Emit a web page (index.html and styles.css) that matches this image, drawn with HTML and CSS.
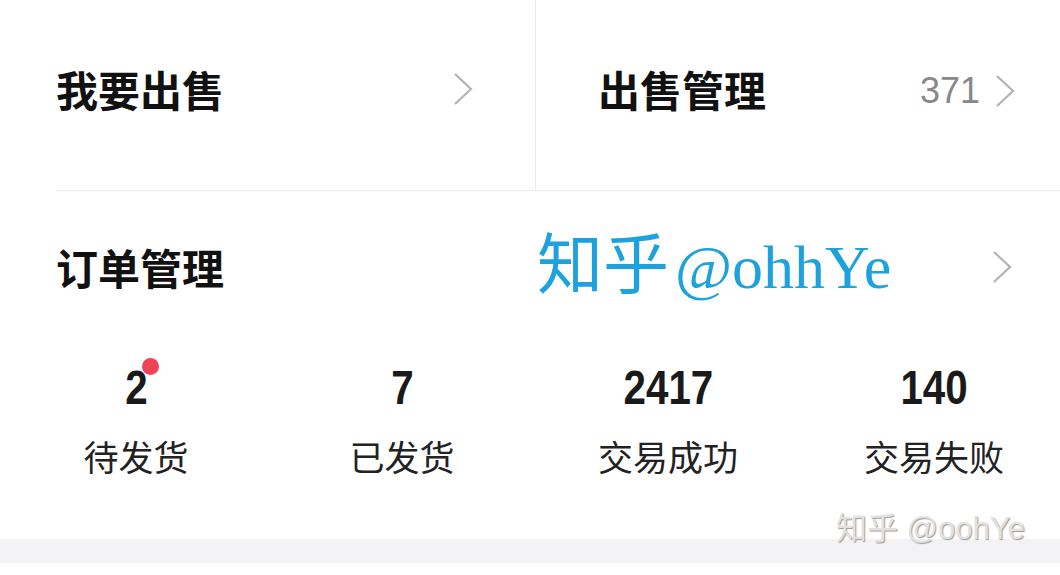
FILE: index.html
```html
<!DOCTYPE html>
<html lang="zh-CN">
<head>
<meta charset="UTF-8">
<meta name="viewport" content="width=device-width, initial-scale=1.0">
<title>出售管理</title>
<link rel="stylesheet" href="styles.css">
</head>
<body>
<div class="page">
  <!-- Top row: two entry cells -->
  <div class="top-row">
    <div class="cell cell-left">
      <span class="title">我要出售</span>
      <svg class="chevron" viewBox="0 0 20 34"><polyline points="2,2 18,17 2,32"/></svg>
    </div>
    <div class="cell cell-right">
      <span class="title">出售管理</span>
      <span class="cell-extra">
        <span class="count">371</span>
        <svg class="chevron" viewBox="0 0 20 34"><polyline points="2,2 18,17 2,32"/></svg>
      </span>
    </div>
  </div>

  <!-- Orders header -->
  <div class="order-row">
    <span class="title">订单管理</span>
    <svg class="chevron" viewBox="0 0 20 34"><polyline points="2,2 18,17 2,32"/></svg>
    <span class="mark-blue"><span class="mark-cjk">知乎</span>@ohhYe</span>
  </div>

  <!-- Order stats -->
  <div class="stats">
    <div class="stat">
      <span class="num">2</span>
      <i class="dot"></i>
      <span class="label">待发货</span>
    </div>
    <div class="stat">
      <span class="num">7</span>
      <span class="label">已发货</span>
    </div>
    <div class="stat">
      <span class="num">2417</span>
      <span class="label">交易成功</span>
    </div>
    <div class="stat">
      <span class="num">140</span>
      <span class="label">交易失败</span>
    </div>
  </div>

  <div class="band"></div>
  <span class="mark-gray">知乎 @oohYe</span>
</div>
</body>
</html>
```

FILE: styles.css
```css
/* Base */
body {
  margin: 0;
  background-color: #fff;
  font-family: "Noto Sans CJK SC", "Noto Sans", sans-serif;
  color: #111;
  overflow: hidden;
}

.page {
  position: relative;
  width: 1060px;
  height: 575px;
  overflow: hidden;
}

/* Top row */
.top-row {
  display: flex;
  height: 191px;
}

.cell {
  display: flex;
  align-items: center;
  justify-content: space-between;
  box-sizing: border-box;
  padding-bottom: 12px;
  border-bottom: 1px solid #ececec;
}

.cell-left {
  width: 480px;
  margin-left: 56px;
  padding-right: 62px;
  border-right: 1px solid #ececec;
}

.cell-right {
  flex: 1;
  padding-left: 62px;
  padding-right: 45px;
}

.title {
  font-size: 42px;
  font-weight: 700;
  line-height: 1;
  color: #111;
}

.cell-extra {
  display: flex;
  align-items: center;
  gap: 15px;
  padding-top: 4px;
}

.count {
  font-family: "Liberation Sans", Arial, sans-serif;
  font-size: 36px;
  color: #888;
  line-height: 1;
}

.chevron {
  width: 20px;
  height: 34px;
  fill: none;
  stroke: #b3b3b3;
  stroke-width: 2.2;
}

/* Orders header */
.order-row {
  position: relative;
  display: flex;
  align-items: center;
  justify-content: space-between;
  height: 152px;
  padding: 0 48px 0 56px;
}

.mark-blue {
  position: absolute;
  left: 537px;
  top: 33px;
  font-family: "Liberation Serif", "Noto Sans CJK SC", serif;
  font-size: 62px;
  line-height: 70px;
  color: #1ea2de;
  white-space: nowrap;
}

.mark-cjk {
  font-family: "Noto Sans CJK SC", sans-serif;
  font-size: 66px;
  font-weight: 400;
  margin-right: 6px;
}

/* Stats */
.stats {
  display: grid;
  grid-template-columns: repeat(4, 266px);
  padding: 21px 0 0 3px;
  height: 196px;
  box-sizing: border-box;
}

.stat {
  position: relative;
  display: flex;
  flex-direction: column;
  align-items: center;
  gap: 26px;
}

.num {
  font-family: "Liberation Sans Narrow", "Liberation Sans", sans-serif;
  font-weight: 700;
  font-size: 48px;
  line-height: 48px;
  color: #1a1a1a;
  transform: scaleX(0.84);
}

.dot {
  position: absolute;
  left: calc(50% + 6px);
  top: -6px;
  width: 17px;
  height: 17px;
  border-radius: 50%;
  background-color: #ee4456;
}

.label {
  font-size: 35px;
  line-height: 35px;
  color: #222;
}

/* Bottom band */
.band {
  height: 24px;
  background-color: #f3f2f5;
}

.mark-gray {
  position: absolute;
  left: 836px;
  top: 509px;
  font-family: "Liberation Sans", "Noto Sans CJK SC", sans-serif;
  font-size: 31px;
  line-height: 40px;
  color: #e2e2e2;
  text-shadow: 1px 1px 1px #9a9a9a;
}
```
